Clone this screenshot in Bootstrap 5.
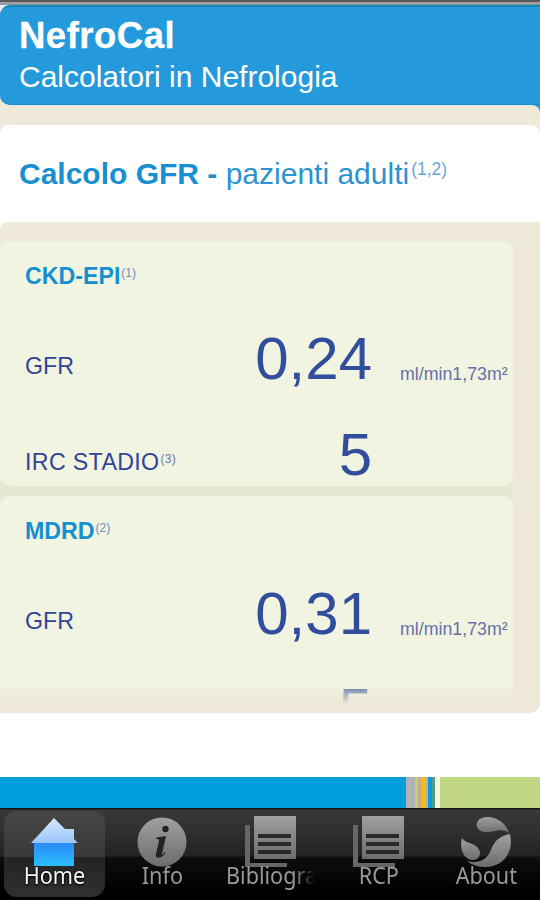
<!DOCTYPE html>
<html lang="it">
<head>
<meta charset="utf-8">
<meta name="viewport" content="width=device-width, initial-scale=1">
<title>NefroCal</title>
<link href="https://cdn.jsdelivr.net/npm/bootstrap@5.3.0/dist/css/bootstrap.min.css" rel="stylesheet">
<style>
body{font-family:"Liberation Sans",Arial,sans-serif;height:900px;background:#fff;}
sup{line-height:0;top:0;font-weight:400}
.status-edge{height:5px;background:linear-gradient(#5c5759 0 2px,#a09ea0 2px 4px,#8596a0 4px)}
.sand{background:#eee9d9}
.brand-bar{height:100px;background:#249adc;border-top:2px solid #1286b8;border-bottom:1px solid #138ed0;border-radius:10px 0 0 10px;padding-left:19px;color:#fff}
.top-wrap{height:120px;background:linear-gradient(#e9eef0 0 20px,#eee9d9 20px)}
.brand-name{font-size:36.5px;line-height:58px;height:49px;letter-spacing:.5px;-webkit-text-stroke:.3px #fff}
.brand-sub{font-size:30px;line-height:36px;margin-top:3px}
.corner-r{background:#249adc}
.lip{height:20px;background:#eee9d9;border-top-right-radius:8px}
.page-title{height:97px;background:#fff;border-radius:8px 9px 0 0;padding-left:19px;font-size:30px;line-height:97px;color:#2c93d2;white-space:nowrap}
.title-back{background:#eee9d9}
.page-title b{color:#188fd0}
.page-title sup{font-size:17.5px;vertical-align:9px;margin-left:2px;color:#6aa5d8}
.panel{height:491px;border-radius:8px 0 10px 0;padding-top:19px}
.scroll-area{height:463px;width:513px}
.cards-stack{background:#e7e8d2;border-radius:10px 10px 0 0}
.result{height:245px;background:#f0f4e0;border-radius:10px;color:#32439a}
.result + .result{margin-top:10px}
.result-head{height:69px;line-height:70px;padding-left:25px;font-size:23.2px;color:#168fd0}
.result-head sup,.lbl sup{font-size:12px;vertical-align:7px;color:#6c90c0;margin-left:1px}
.lbl sup{color:#6f78a8}
.line-item{height:96px;padding-left:25px;white-space:nowrap}
.lbl{font-size:23.2px;line-height:112px;width:180px}
.lbl-wide{letter-spacing:.35px}
.num{font-size:60px;line-height:97px;width:167px;color:#304e9d}
.unit{font-size:17.8px;line-height:129px;padding-left:28px;color:#6670aa}
.fade-out{height:22px;left:0;right:0;bottom:0;background:linear-gradient(rgba(238,233,217,0),rgba(238,233,217,.6) 50%,#eee9d9)}
.stripes{height:31px;margin-top:64px}
.tabs{height:92px;background:linear-gradient(#141414 0 1px,#393939 2px,#232323 48px,#0e0e0e 49px,#000 90%);font-family:"Noto Sans","Open Sans",sans-serif}
.tab-item{width:108px;padding:3px 3px 3px 4px;color:#999}
.tab-face{height:86px;border-radius:13px;position:relative}
.tab-item.active .tab-face{background:linear-gradient(#464646,#393939 53%,#242424 54%,#303030)}
.tab-face svg{display:block;width:100px;height:56px}
.tab-label{position:absolute;left:0;right:0;top:49px;line-height:30px;font-size:23.5px;text-align:center;white-space:nowrap}
.tab-label span{display:inline-block;transform:scaleX(.92)}
.active .tab-label{color:#f5f5f5;text-shadow:0 0 3px #000,0 1px 2px #000}
.clip{overflow:hidden;text-align:left;left:6px;right:2px;-webkit-mask-image:linear-gradient(90deg,#000 72%,transparent 96%);mask-image:linear-gradient(90deg,#000 72%,transparent 96%)}
.clip span{transform-origin:left}
</style>
</head>
<body class="overflow-hidden d-flex flex-column">
<div class="status-edge flex-shrink-0"></div>
<header class="top-wrap flex-shrink-0">
  <div class="brand-bar">
    <div class="brand-name fw-bold">NefroCal</div>
    <div class="brand-sub">Calcolatori in Nefrologia</div>
  </div>
  <div class="corner-r"><div class="lip"></div></div>
</header>
<div class="title-back flex-shrink-0"><h1 class="page-title m-0 fw-normal"><b>Calcolo GFR - </b>pazienti adulti<sup>(1,2)</sup></h1></div>
<main class="panel sand flex-shrink-0">
  <div class="scroll-area overflow-hidden position-relative">
    <div class="cards-stack">
      <section class="result">
        <div class="result-head fw-bold">CKD-EPI<sup>(1)</sup></div>
        <div class="line-item d-flex align-items-start"><div class="lbl">GFR</div><div class="num text-end">0,24</div><div class="unit">ml/min1,73m²</div></div>
        <div class="line-item d-flex align-items-start"><div class="lbl lbl-wide">IRC STADIO<sup>(3)</sup></div><div class="num text-end">5</div></div>
      </section>
      <section class="result">
        <div class="result-head fw-bold">MDRD<sup>(2)</sup></div>
        <div class="line-item d-flex align-items-start"><div class="lbl">GFR</div><div class="num text-end">0,31</div><div class="unit">ml/min1,73m²</div></div>
        <div class="line-item d-flex align-items-start"><div class="lbl"></div><div class="num text-end">5</div></div>
      </section>
    </div>
    <div class="fade-out position-absolute"></div>
  </div>
</main>
<div class="stripes d-flex flex-shrink-0">
  <svg width="540" height="31" viewBox="0 0 540 31" shape-rendering="crispEdges">
    <path fill="#009ddd" d="M0 0h406v31H0z"/><path fill="#b0b2b3" d="M406 0h9v31h-9z"/><path fill="#c9ce72" d="M415 0h3v31h-3z"/><path fill="#c8a98c" d="M418 0h3v31h-3z"/><path fill="#fdb913" d="M421 0h5v31h-5z"/><path fill="#b8b58a" d="M426 0h2v31h-2z"/><path fill="#0b9ad5" d="M428 0h4v31h-4z"/><path fill="#5a9a88" d="M432 0h3v31h-3z"/><path fill="#f6f8dc" d="M435 0h5v31h-5z"/><path fill="#c1d784" d="M440 0h100v31H440z"/>
  </svg>
</div>
<nav class="tabs d-flex flex-shrink-0">
  <svg width="0" height="0" class="position-absolute">
    <defs>
      <linearGradient id="grey" x1="0" y1="0" x2="0" y2="1"><stop offset="0" stop-color="#a0a0a0"/><stop offset="1" stop-color="#6c6c6c"/></linearGradient>
      <linearGradient id="roof" x1="0" y1="0" x2="0" y2="1"><stop offset="0" stop-color="#d4e7fc"/><stop offset="1" stop-color="#9ac6fa"/></linearGradient>
      <linearGradient id="wall" x1="0" y1="0" x2="0" y2="1"><stop offset="0" stop-color="#2a8cf6"/><stop offset="1" stop-color="#29bdff"/></linearGradient>
      <g id="docs">
        <path fill="#666" d="M33 14h5v38h37v4H33z"/>
        <path fill="url(#grey)" d="M42 5h42v43H42z"/>
        <path fill="#292929" d="M46 23h33v4H46zM46 31h33v4H46zM46 39h33v4H46z"/>
      </g>
    </defs>
  </svg>
  <div class="tab-item active"><div class="tab-face">
    <svg viewBox="0 0 100 56"><path fill="url(#wall)" d="M30 32h40v23H30z"/><path fill="url(#roof)" d="M50 7l11 11h9v10l4 4H27z"/></svg>
    <div class="tab-label"><span>Home</span></div></div></div>
  <div class="tab-item"><div class="tab-face">
    <svg viewBox="0 0 100 56"><circle cx="50" cy="31" r="24.500" fill="url(#grey)"/><circle cx="53.500" cy="18" r="3.200" fill="#222"/><path fill="#222" d="M44.500 26.500l9.500-1.500-4 17.500c-.5 2 1 1.500 2.500-1.500l1 1c-3.500 6-11 6.500-9.500 1l3-13c.4-1.800-1-2-3-2z"/></svg>
    <div class="tab-label"><span>Info</span></div></div></div>
  <div class="tab-item"><div class="tab-face">
    <svg viewBox="0 0 100 56"><use href="#docs" x="-8"/></svg>
    <div class="tab-label clip"><span>Bibliografia</span></div></div></div>
  <div class="tab-item"><div class="tab-face">
    <svg viewBox="0 0 100 56"><use href="#docs" x="-8"/></svg>
    <div class="tab-label"><span>RCP</span></div></div></div>
  <div class="tab-item"><div class="tab-face">
    <svg viewBox="0 0 100 56"><path fill="url(#grey)" d="M73 22C66 17 60 20 53 21 37 23 37 6 51 6 61 6 70 12 73 22z"/><path fill="url(#grey)" d="M74 23C78 39 69 56 49 56 42 56 36 54 31 50 42 53 50 49 54 41 58 32 60 26 74 23z"/><path fill="url(#grey)" d="M26 27C30 33 37 31 42 37 47 43 42 50 36 49 28 48 23 38 26 27z"/></svg>
    <div class="tab-label"><span>About</span></div></div></div>
</nav>
<script src="https://cdn.jsdelivr.net/npm/bootstrap@5.3.0/dist/js/bootstrap.bundle.min.js"></script>
</body>
</html>
